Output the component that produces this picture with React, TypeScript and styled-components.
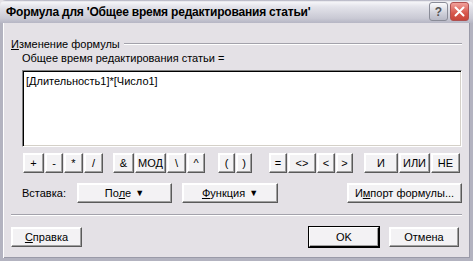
import React from "react";
import styled, { createGlobalStyle } from "styled-components";

const Global = createGlobalStyle`
  html, body { margin: 0; padding: 0; background: #ffffff; }
  body { font-family: "Liberation Sans", Arial, sans-serif; font-size: 11px; color: #000; }
`;

const Window = styled.div`
  width: 473px;
  height: 261px;
  display: flex;
  flex-direction: column;
  background: #e4e1e6;
  box-sizing: border-box;
  overflow: hidden;
`;

const TitleBar = styled.div`
  height: 23px;
  flex: none;
  display: flex;
  align-items: center;
  padding: 0 4px 0 6px;
  box-sizing: border-box;
  background: linear-gradient(
    to bottom,
    #a9a9b9 0%,
    #f6f6f9 8%,
    #e3e3ea 30%,
    #d6d6df 55%,
    #c9c9d4 80%,
    #b5b5c4 100%
  );
  border-top-left-radius: 6px;
  border-top-right-radius: 6px;
`;

const Title = styled.div`
  flex: 1;
  font-family: "Liberation Sans", Arial, sans-serif;
  font-weight: bold;
  font-size: 12px;
  letter-spacing: -0.2px;
  color: #000;
  white-space: nowrap;
`;

const CaptionButton = styled.div<{ $red?: boolean }>`
  width: 19px;
  height: 19px;
  margin-left: 2px;
  border-radius: 3px;
  box-sizing: border-box;
  border: 1px solid ${(p) => (p.$red ? "#b05050" : "#8a8c98")};
  background: ${(p) =>
    p.$red
      ? "linear-gradient(to bottom, #f1a09a, #d7574c 60%, #c8453a)"
      : "linear-gradient(to bottom, #fbfbfd, #cfd0da 60%, #b8b9c6)"};
  display: flex;
  align-items: center;
  justify-content: center;
  color: #555;
  font-weight: bold;
  font-size: 12px;
`;

const Body = styled.div`
  flex: 1;
  display: flex;
  flex-direction: column;
  padding: 0 8px 0 8px;
  border-left: 3px solid #b3b3c0;
  border-right: 3px solid #b3b3c0;
  border-bottom: 3px solid #b3b3c0;
  box-shadow: inset 1px 0 0 #ffffff, inset -1px 0 0 #9a9aa8, inset 0 -1px 0 #9a9aa8;
  box-sizing: border-box;
`;

const GroupHeader = styled.div`
  margin-top: 14px;
  height: 13px;
  display: flex;
  align-items: center;
  gap: 4px;
  &::after {
    content: "";
    flex: 1;
    height: 0;
    border-top: 1px solid #a3a2ab;
    border-bottom: 1px solid #ffffff;
  }
`;

const U = styled.span`
  text-decoration: underline;
`;

const Inner = styled.div`
  padding-left: 11px;
  display: flex;
  flex-direction: column;
`;

const FieldLabel = styled.div`
  margin-top: 2px;
  height: 13px;
  line-height: 13px;
  white-space: nowrap;
`;

const FormulaBox = styled.div`
  margin-top: 5px;
  height: 77px;
  box-sizing: border-box;
  background: #ffffff;
  border-top: 1px solid #808080;
  border-left: 1px solid #808080;
  border-right: 1px solid #ffffff;
  border-bottom: 1px solid #ffffff;
  box-shadow: inset 1px 1px 0 #000000, inset -1px -1px 0 #d4d0c8;
  padding: 4px 3px;
  white-space: nowrap;
  line-height: 13px;
`;

const OpRow = styled.div`
  margin-top: 6px;
  height: 20px;
  display: flex;
`;

const Btn = styled.div<{ $w: number; $ml?: number; $default?: boolean }>`
  width: ${(p) => p.$w}px;
  margin-left: ${(p) => p.$ml ?? 0}px;
  height: 20px;
  flex: none;
  box-sizing: border-box;
  display: flex;
  align-items: center;
  justify-content: center;
  gap: 4px;
  background: #f3f2f4;
  border-top: 1px solid #ffffff;
  border-left: 1px solid #ffffff;
  border-right: 1px solid ${(p) => (p.$default ? "#000000" : "#5a5a5a")};
  border-bottom: 1px solid ${(p) => (p.$default ? "#000000" : "#5a5a5a")};
  box-shadow: ${(p) =>
    p.$default
      ? "0 0 0 1px #000000, inset -1px -1px 0 #a0a0a0"
      : "inset -1px -1px 0 #a0a0a0, inset 1px 1px 0 #ffffff"};
  white-space: nowrap;
  line-height: 13px;
`;

const InsertRow = styled.div`
  margin-top: 10px;
  height: 20px;
  display: flex;
  align-items: center;
`;

const InsertLabel = styled.div`
  width: 55px;
  flex: none;
`;

const Spacer = styled.div`
  flex: 1;
`;

const Arrow = styled.span`
  font-size: 9px;
  line-height: 9px;
`;

const Separator = styled.div`
  margin-top: 11px;
  height: 0;
  border-top: 1px solid #a3a2ab;
  border-bottom: 1px solid #ffffff;
`;

const BottomRow = styled.div`
  margin-top: 11px;
  height: 20px;
  display: flex;
  align-items: center;
  padding-right: 3px;
`;

const ops: [string, number, number][] = [
  ["+", 21, 1],
  ["-", 18, 1],
  ["*", 19, 1],
  ["/", 19, 1],
  ["&", 21, 10],
  ["МОД", 31, 1],
  ["\\", 19, 1],
  ["^", 18, 1],
  ["(", 17, 13],
  [")", 16, 1],
  ["=", 18, 17],
  ["<>", 28, 1],
  ["<", 18, 1],
  [">", 17, 1],
  ["И", 34, 11],
  ["ИЛИ", 31, 1],
  ["НЕ", 29, 1],
];

export default function App() {
  return (
    <>
      <Global />
      <Window>
        <TitleBar>
          <Title>Формула для 'Общее время редактирования статьи'</Title>
          <CaptionButton>?</CaptionButton>
          <CaptionButton $red>
            <svg width="11" height="11" viewBox="0 0 11 11">
              <path d="M1.5 1.5 L9.5 9.5 M9.5 1.5 L1.5 9.5" stroke="#ffffff" strokeWidth="2" strokeLinecap="round" />
            </svg>
          </CaptionButton>
        </TitleBar>
        <Body>
          <GroupHeader>
            <span>
              <U>И</U>зменение формулы
            </span>
          </GroupHeader>
          <Inner>
            <FieldLabel>Общее время редактирования статьи =</FieldLabel>
            <FormulaBox>[Длительность1]*[Число1]</FormulaBox>
            <OpRow>
              {ops.map(([label, w, ml], i) => (
                <Btn key={i} $w={w} $ml={ml}>
                  {label}
                </Btn>
              ))}
            </OpRow>
            <InsertRow>
              <InsertLabel>Вставка:</InsertLabel>
              <Btn $w={95}>
                <span>
                  По<U>л</U>е
                </span>
                <Arrow>▼</Arrow>
              </Btn>
              <Btn $w={96} $ml={10}>
                <span>
                  <U>Ф</U>ункция
                </span>
                <Arrow>▼</Arrow>
              </Btn>
              <Spacer />
              <Btn $w={115}>
                <span>
                  И<U>м</U>порт формулы...
                </span>
              </Btn>
            </InsertRow>
          </Inner>
          <Separator />
          <BottomRow>
            <Btn $w={71}>
              <span>
                <U>С</U>правка
              </span>
            </Btn>
            <Spacer />
            <Btn $w={70} $default>
              OK
            </Btn>
            <Btn $w={70} $ml={10}>
              Отмена
            </Btn>
          </BottomRow>
        </Body>
      </Window>
    </>
  );
}
